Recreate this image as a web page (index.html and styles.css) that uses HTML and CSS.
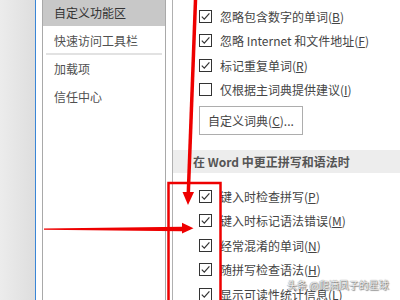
FILE: index.html
```html
<!DOCTYPE html>
<html lang="zh-CN">
<head>
    <meta charset="UTF-8">
    <title>Word 选项 - 校对</title>
    <link rel="stylesheet" href="styles.css">
</head>
<body>
    <div class="page">
        <div class="side"></div>

        <div class="nav">
            <div class="nav-item selected">自定义功能区</div>
            <div class="nav-item first">快速访问工具栏</div>
            <div class="nav-sep"></div>
            <div class="nav-item after-sep">加载项</div>
            <div class="nav-item">信任中心</div>
        </div>

        <div class="content">
            <div class="group top">
                <div class="row"><span class="box checked"></span>忽略包含数字的单词(<u>B</u>)</div>
                <div class="row"><span class="box checked"></span>忽略 Internet 和文件地址(<u>F</u>)</div>
                <div class="row"><span class="box checked"></span>标记重复单词(<u>R</u>)</div>
                <div class="row"><span class="box"></span>仅根据主词典提供建议(<u>I</u>)</div>
            </div>
            <button class="btn" type="button">自定义词典(<u>C</u>)...</button>

            <div class="section">在 Word 中更正拼写和语法时</div>

            <div class="group">
                <div class="row"><span class="box checked"></span>键入时检查拼写(<u>P</u>)</div>
                <div class="row"><span class="box checked"></span>键入时标记语法错误(<u>M</u>)</div>
                <div class="row"><span class="box checked"></span>经常混淆的单词(<u>N</u>)</div>
                <div class="row"><span class="box checked"></span>随拼写检查语法(<u>H</u>)</div>
                <div class="row"><span class="box checked"></span>显示可读性统计信息(<u>L</u>)</div>
            </div>
        </div>
    </div>

    <!-- 红色标注 -->
    <svg class="marks" width="400" height="300" viewBox="0 0 400 300">
        <line x1="195.5" y1="0" x2="188.3" y2="193" stroke="#ee0000" stroke-width="3.5"/>
        <polygon points="182.5,192 194,192 188,205" fill="#ee0000"/>
        <polygon points="44,228.6 182,226.8 182,222.8 193.5,228.3 182,233.5 182,231.2 44,229.8" fill="#ee0000"/>
        <rect x="168.5" y="183" width="52" height="140" fill="none" stroke="#ee0000" stroke-width="2.5"/>
    </svg>

    <div class="watermark">头条 @爬满凤子的星球</div>
</body>
</html>
```

FILE: styles.css
```css
body {
    margin: 0;
    width: 400px;
    height: 300px;
    overflow: hidden;
    background: #fff;
    font-family: "Noto Sans CJK SC", sans-serif;
    font-size: 12px;
    color: #444;
}

.page {
    display: flex;
    height: 300px;
}

.side {
    width: 35px;
    flex-shrink: 0;
    background: linear-gradient(to right, #ececec, #dedede);
    border-right: 1px solid #3a86d6;
}

.nav {
    width: 122px;
    flex-shrink: 0;
    margin-left: 6px;
    border-left: 1px solid #a9a9a9;
    border-right: 1px solid #a9a9a9;
}

.nav-item {
    padding-left: 11px;
    line-height: 16px;
    padding-top: 12px;
    color: #505050;
}

.nav-item.selected {
    background: #c8c8c8;
    height: 26px;
    line-height: 26px;
    padding-top: 0;
    color: #333;
}

.nav-item.first {
    padding-top: 7px;
}

.nav-item.after-sep {
    padding-top: 0;
}

.nav-sep {
    height: 2px;
    margin: 4px 3px 6px;
    background: #e2e2e2;
}

.content {
    flex: 1;
    margin-left: 6px;
    border-left: 1px solid #b0b0b0;
}

.group {
    padding-top: 10.75px;
}

.group.top {
    padding-top: 3.75px;
}

.row {
    display: flex;
    align-items: center;
    height: 24.5px;
    padding-left: 26px;
    white-space: nowrap;
}

.box {
    width: 11px;
    height: 11px;
    margin-right: 8px;
    border: 1px solid #333;
    background: #fff no-repeat center;
    flex-shrink: 0;
}

.box.checked {
    background-image: url("data:image/svg+xml,%3Csvg xmlns='http://www.w3.org/2000/svg' width='11' height='11'%3E%3Cpolyline points='1.8,5.6 4.3,8.2 9.4,2.4' fill='none' stroke='%23333' stroke-width='1.2'/%3E%3C/svg%3E");
}

.btn {
    display: block;
    margin: 4.25px 0 0 26px;
    width: 104px;
    height: 29px;
    padding: 0;
    border: 1px solid #adadad;
    background: #fff;
    font-family: inherit;
    font-size: 12px;
    color: #444;
}

.section {
    margin-top: 15px;
    height: 23px;
    line-height: 23px;
    padding-left: 20px;
    background: #ededed;
    font-weight: bold;
    color: #555;
}

.marks {
    position: absolute;
    left: 0;
    top: 0;
}

.watermark {
    position: absolute;
    left: 287px;
    top: 278px;
    font-size: 10px;
    line-height: 14px;
    white-space: nowrap;
    color: rgba(255, 255, 255, 0.92);
    text-shadow: 0 0 1px #444, 1px 1px 1px rgba(0, 0, 0, 0.45);
}
```
